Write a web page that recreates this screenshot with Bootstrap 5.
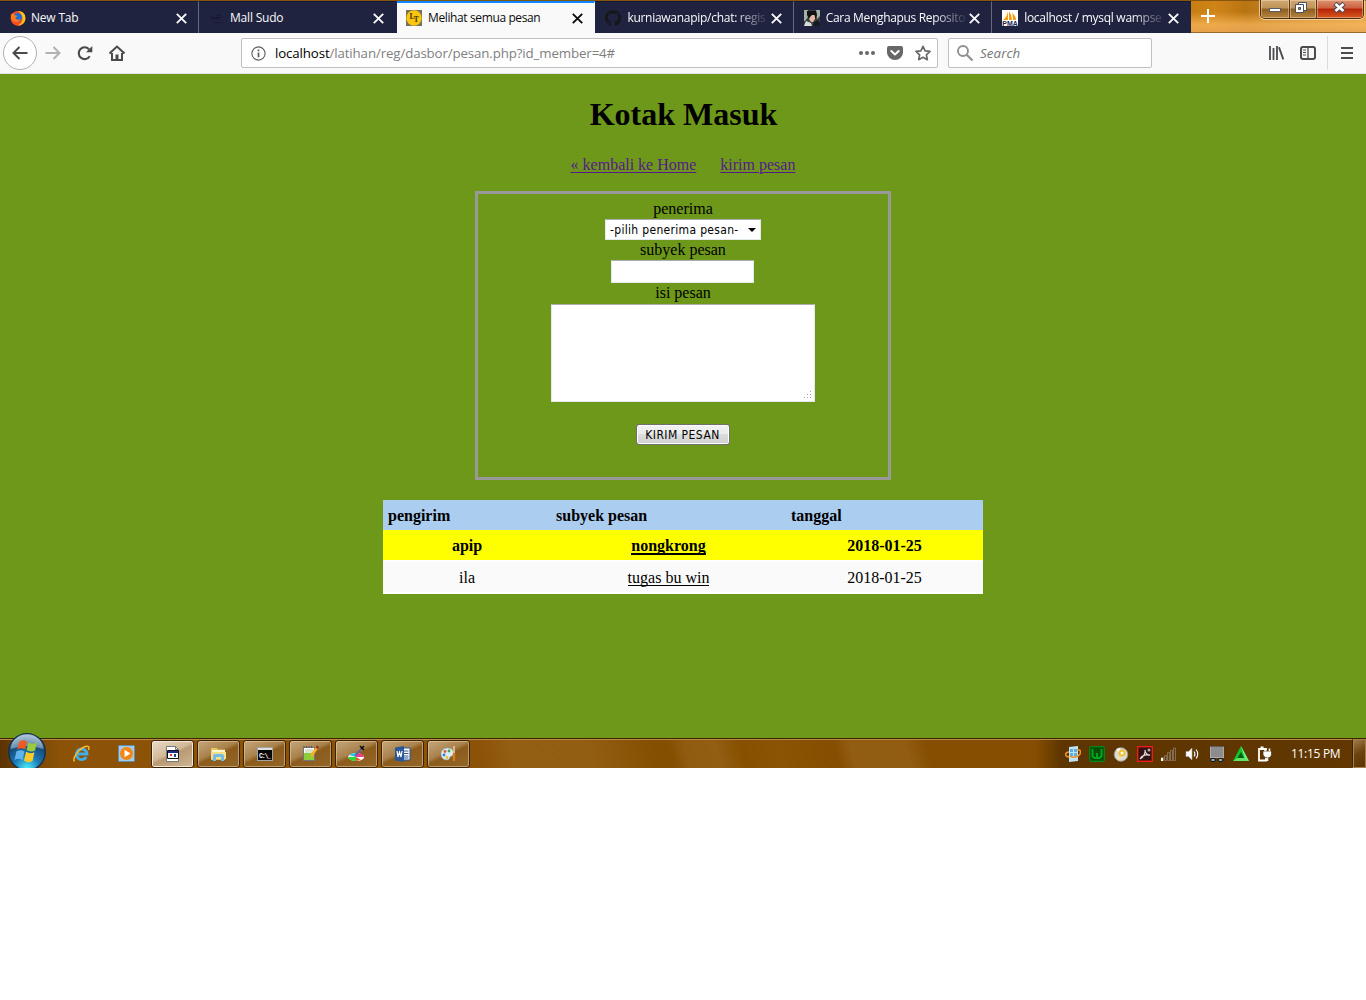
<!DOCTYPE html>
<html lang="id">
<head>
<meta charset="utf-8">
<title>Melihat semua pesan</title>
<link rel="stylesheet" href="https://cdn.jsdelivr.net/npm/bootstrap@5.3.0/dist/css/bootstrap.min.css">
<style>
body{font-family:"Open Sans","Noto Sans",sans-serif;font-size:12px;color:#000;background:#fff;overflow:hidden}
svg{display:block;flex:none}
.screen{width:1366px;height:768px;overflow:hidden}
/* tab strip */
.tabstrip{height:33px;border-top:1px solid #85540f;background:linear-gradient(90deg,#c77d12 1190px,#cf8417 1215px,#b97412 1245px,#c9872e 1290px,#dd9c42 1366px)}
.strip-tail{background:linear-gradient(180deg,rgba(255,190,90,0) 35%,rgba(255,190,100,.65) 75%,rgba(235,170,90,.8));border-bottom:1px solid #9a6a2a;position:relative}
.tab-item{width:198.4px;padding:1px 11px 0 10px;background:#202340;color:#f9f9fa;border-right:1px solid #65677a;border-top:1px solid #181a33}
.tab-item:first-child{width:199px}
.tab-item:nth-child(2){width:198px;padding-right:12px}
.tab-item.no-line{border-right-color:#202340}
.tab-item.is-active{background:#f9f9f9;color:#0c0c0d;border-top:2px solid #0a84ff;border-right-color:#f9f9f9;padding-top:0;padding-left:9px}
.tab-title{width:140px;margin-left:5px;white-space:nowrap;overflow:hidden;letter-spacing:-.38px;line-height:18px}
.tab-item.is-active .tab-title{margin-left:6px}
.tab-title.fade-end{letter-spacing:-.28px;-webkit-mask-image:linear-gradient(90deg,#000 108px,rgba(0,0,0,.12) 138px)}
.winctl{position:absolute;right:2px;top:-1px;height:19px;width:104px;border:1px solid #4b2d10;border-top:0;border-radius:0 0 5px 5px;box-shadow:0 0 0 1px rgba(255,230,190,.7);overflow:hidden}
.winctl>div{border-right:1px solid #5a3a18;background:linear-gradient(#d0a873,#c09358 45%,#8e5d1c 50%,#b88440);box-shadow:inset 0 0 0 1px rgba(255,235,205,.4)}
.winctl>div:last-child{border:0;background:linear-gradient(#dd9270,#cc6040 45%,#b42305 50%,#d75920)}
/* toolbar */
.toolbar{height:41px;background:#f9f9f9;border-bottom:1px solid #e2e2e2}
.back-btn{width:34px;height:34px;border:1px solid #b0b0b0;border-radius:50%;background:#fff}
.field{height:30px;background:#fff;border:1px solid #c0c0c0;border-radius:2px;font-size:13.3px}
.urlbar{width:697px}
.searchbar{width:204px}
.url-text{letter-spacing:-.13px;color:#808080;white-space:nowrap;padding-top:2px}
.search-text{color:#757575;font-style:italic;letter-spacing:.1px;padding-top:2px}
.tool-rule{width:1px;height:34px;background:#dcdcdc}
/* page */
.page{height:664px;background:#6e9819;font-family:"Liberation Serif",serif;font-size:16px;line-height:18px}
.page h1{font-size:32px;font-weight:700;line-height:36px;margin:0;padding:22px 0 1px 1px}
.nav-links{margin-top:23px;height:19px;gap:24px;font-size:16px}
.nav-links a{color:#551a8b;text-decoration:underline;text-underline-offset:2px;text-decoration-thickness:1px}
.send-box{width:416px;height:289px;border:3px solid #999;margin-top:16px;padding-top:6px}
.ctl{font-family:"DejaVu Sans Condensed","DejaVu Sans",sans-serif;font-size:12px;color:#000;border-radius:1px;background:#fff;border:1px solid #e3e9ef;border-top-color:#abadb3}
.ctl-select{width:156px;height:21px;padding:1px 4px 0;letter-spacing:.32px}
.ctl-input{width:143px;height:23px;margin-right:2px}
.ctl-area{width:264px;height:98px;padding:2px}
.ctl-btn{width:94px;height:21px;margin-top:22px;margin-right:1px;padding:1px 0 0;border:1px solid #707070;border-radius:3px;background:linear-gradient(#f2f2f2,#ebebeb 48%,#dddddd 50%,#cfcfcf);box-shadow:inset 0 0 0 1px #fcfcfc;line-height:19px;letter-spacing:.45px}
.inbox{width:600px;margin-top:20px;table-layout:fixed;border-collapse:collapse}
.inbox th{height:30px;background:#abcdef;padding:2px 5px 0;font-weight:700;text-align:left}
.inbox td{height:30px;padding:2px 5px 0;text-align:center}
.inbox a{color:#000;text-decoration:none;border-bottom:1px solid #000;display:inline-block;line-height:15px}
.inbox .unread td{background:#ff0;font-weight:700}
.inbox .unread a{border-bottom-width:2px;line-height:14px}
.inbox .seen td{height:34px;background:linear-gradient(#fff 2px,#fafafa 2px,#fafafa 32px,#fff 32px)}
/* taskbar */
.taskbar{height:30px;position:relative;border-top:1px solid #392304;box-shadow:inset 0 1px 0 #b98c4a;
background:linear-gradient(90deg,rgba(70,38,0,.7),rgba(70,38,0,.15) 45px,transparent 60px,transparent 1035px,rgba(60,32,0,.55) 1062px,rgba(60,32,0,.5)),
linear-gradient(76deg,#8c5208 470px,#935f12 500px,#925e12 575px,#854f00 640px,#854f00 655px,#905c10 670px,#925e12 700px,#875000 724px,#8a5402 760px,#854e00 815px,#915d12 830px,#915d12 884px,#854e00 905px,#884f00)}
.orb{position:absolute;left:7px;top:-7px}
.task{width:43px;height:28px;margin-right:3px;border:1px solid #3a2204;border-radius:3px;background:linear-gradient(155deg,#c5a67b,#a9824c 42%,#8b5c1c 52%,#946628);box-shadow:inset 0 0 0 1px rgba(240,215,175,.5)}
.task.is-on{background:linear-gradient(155deg,#e9dccb,#d0b997 45%,#b89972 52%,#cfb796);box-shadow:inset 0 0 0 1px #f3e8d8}
.tray{gap:8px}
.clock{color:#fff;width:49px;white-space:nowrap;letter-spacing:-.3px;margin-left:18px}
.peek{width:14px;height:29px;margin-left:12px;border:1px solid #a78050;border-left-color:#3a2204;background:linear-gradient(150deg,#a17b4c,#6b420c 50%,#5a3503);box-shadow:inset 1px 0 0 #a78050}
</style>
</head>
<body>
<svg width="0" height="0" class="position-absolute"><defs>
<symbol id="close" viewBox="0 0 11 11"><path d="M.8.8l9.400 9.400M10.200.8L.8 10.200" stroke="currentColor" stroke-width="1.900" fill="none"/></symbol>
</defs></svg>
<div class="screen d-flex flex-column">
<div class="tabstrip d-flex flex-shrink-0">
  <div class="tab-item d-flex align-items-center flex-shrink-0">
    <svg width="16" height="16" viewBox="0 0 16 16"><circle cx="8" cy="8.300" r="7.400" fill="#ff4b1f"/><path d="M8 1c5 0 8 3.500 7.300 8.500-.6 3.500-3.500 6-7.300 6 3-2 5-4 4.500-8C12 4.500 10 2.500 8 1z" fill="#ffc61a"/><circle cx="7.700" cy="7.200" r="4.200" fill="#1a6fd8"/><path d="M.8 4.500L3 3l2 2.300 2.500.6-2 1.800c0 2 3 2.600 5 1.300-1 3-5.500 4-8 1.500C1 9 .6 6.500.8 4.500z" fill="#ff7a18"/></svg>
    <div class="tab-title" style="letter-spacing:-.2px">New Tab</div><svg class="ms-auto" width="11" height="11"><use href="#close"/></svg>
  </div>
  <div class="tab-item no-line d-flex align-items-center flex-shrink-0">
    <svg width="16" height="16" viewBox="0 0 16 16"><path d="M1 7.500h10l2-1M2 9h9M5 12.500h6M7 6l5-1" stroke="#15172e" stroke-width=".9" fill="none"/></svg>
    <div class="tab-title" style="letter-spacing:-.2px">Mall Sudo</div><svg class="ms-auto" width="11" height="11"><use href="#close"/></svg>
  </div>
  <div class="tab-item is-active d-flex align-items-center flex-shrink-0">
    <svg width="16" height="16" viewBox="0 0 16 16"><rect width="16" height="16" fill="#77705d"/><circle cx="8" cy="8" r="7.700" fill="#fcc60e"/><text x="3.600" y="9" font-family="Liberation Serif" font-weight="700" font-size="8" fill="#4a3a08">L</text><text x="7.400" y="12" font-family="Liberation Serif" font-weight="700" font-size="8" fill="#4a3a08">T</text></svg>
    <div class="tab-title">Melihat semua pesan</div><svg class="ms-auto" width="11" height="11"><use href="#close"/></svg>
  </div>
  <div class="tab-item d-flex align-items-center flex-shrink-0">
    <svg width="16" height="16" viewBox="0 0 16 16"><path fill="#15171b" d="M8 0C3.580 0 0 3.580 0 8c0 3.540 2.290 6.530 5.470 7.590.4.070.55-.17.55-.38v-1.490c-2.010.37-2.530-.49-2.690-.94-.09-.23-.48-.94-.82-1.130-.28-.15-.68-.52-.01-.53.63-.01 1.080.58 1.230.82.72 1.210 1.870.87 2.330.66.070-.52.28-.87.510-1.070-1.780-.2-3.640-.89-3.640-3.950 0-.87.310-1.590.82-2.150-.08-.2-.36-1.020.08-2.120 0 0 .67-.21 2.200.82a7.600 7.600 0 0 1 4 0c1.530-1.040 2.200-.82 2.200-.82.440 1.100.16 1.920.08 2.120.510.56.82 1.270.82 2.150 0 3.070-1.870 3.750-3.650 3.950.29.25.54.73.54 1.480v2.200c0 .21.15.46.55.38A8 8 0 0 0 16 8c0-4.420-3.580-8-8-8z"/></svg>
    <div class="tab-title fade-end" style="margin-left:6px">kurniawanapip/chat: regis</div><svg class="ms-auto" width="11" height="11"><use href="#close"/></svg>
  </div>
  <div class="tab-item d-flex align-items-center flex-shrink-0">
    <svg width="16" height="16" viewBox="0 0 16 16"><rect width="16" height="16" fill="#39423f"/><path d="M0 0h4v7L1 11H0zM12 0h4v6l-3 3z" fill="#9fb3a9"/><path d="M5 4h6v5l-2 3H7L5 9z" fill="#e4b8a4"/><path d="M3 1h9l1 4-1.500 4-1-4H8L6 7 5 9 3 5z" fill="#111"/><path d="M0 16l2-5 5 2 1 3z" fill="#d9dcdc"/><path d="M9 16l1-4 4-2 2 3v3z" fill="#161a22"/></svg>
    <div class="tab-title fade-end" style="margin-left:6px;letter-spacing:-.33px">Cara Menghapus Reposito</div><svg class="ms-auto" width="11" height="11"><use href="#close"/></svg>
  </div>
  <div class="tab-item no-line d-flex align-items-center flex-shrink-0">
    <svg width="16" height="16" viewBox="0 0 16 16"><rect width="16" height="16" fill="#fff"/><path d="M1 10Q5 7 6 1v9zM7 10V1q3 4 3 9zM11 10q0-4-1-7 4 3 4 7z" fill="#f89c0e"/><text x=".3" y="15.800" textLength="15.400" lengthAdjust="spacingAndGlyphs" font-family="Liberation Sans" font-weight="700" font-size="6.500" fill="#24264f">PMA</text></svg>
    <div class="tab-title fade-end" style="margin-left:6px">localhost / mysql wampse</div><svg class="ms-auto" width="11" height="11"><use href="#close"/></svg>
  </div>
  <div class="strip-tail flex-grow-1 d-flex">
    <svg width="34" height="32" viewBox="0 0 34 32"><path d="M10 15h14M17 8v14" stroke="#fff" stroke-width="2"/></svg>
    <div class="winctl d-flex">
      <div style="width:29px"><svg width="28" height="18"><rect x="8.500" y="8.500" width="11" height="3" fill="#fff" stroke="#555b6b"/></svg></div>
      <div style="width:27px"><svg width="26" height="18"><path d="M8.500 2.500h8v8h-8z" fill="#fff" stroke="#4b4f61"/><path d="M5.500 4.500h8v8h-8z" fill="#fff" stroke="#4b4f61"/><path d="M8.500 7.500h2v2h-2z" fill="#b38548" stroke="#4b4f61"/></svg></div>
      <div class="flex-grow-1"><svg width="46" height="18"><path d="M18 3.500l9 8M27 3.500l-9 8" stroke="#4b4858" stroke-width="4.800"/><path d="M18.500 4l8 7M26.500 4l-8 7" stroke="#fff" stroke-width="2.600"/></svg></div>
    </div>
  </div>
</div>

<div class="toolbar d-flex align-items-center flex-shrink-0">
  <div class="back-btn d-flex align-items-center justify-content-center" style="margin-left:3px"><svg width="16" height="14" viewBox="0 0 16 14"><path d="M15.500 7H2M7.500 1L1.500 7l6 6" fill="none" stroke="#4b4b4d" stroke-width="2"/></svg></div>
  <svg style="margin-left:8px" width="16" height="14" viewBox="0 0 16 14"><path d="M.5 7H14M8.500 1l6 6-6 6" fill="none" stroke="#b2b2b2" stroke-width="2"/></svg>
  <svg style="margin-left:16px" width="16" height="16" viewBox="0 0 16 16"><path d="M12.700 11.300A5.900 5.900 0 1 1 12 4.200" fill="none" stroke="#4b4b4d" stroke-width="2.100"/><path d="M15.300 1v6.300H9z" fill="#4b4b4d"/></svg>
  <svg style="margin-left:16px" width="16" height="16" viewBox="0 0 16 16"><path d="M.5 8.500L8 1.500l7.500 7" fill="none" stroke="#4b4b4d" stroke-width="2"/><path d="M3 8v7h10V8" fill="none" stroke="#4b4b4d" stroke-width="2"/><path d="M6.500 15V9.500h3V15z" fill="#4b4b4d"/></svg>
  <div class="field urlbar d-flex align-items-center" style="margin-left:116px;padding:0 6px 0 9px">
    <svg width="15" height="15" viewBox="0 0 15 15"><circle cx="7.500" cy="7.500" r="6.600" fill="none" stroke="#5c5c5c" stroke-width="1.100"/><path d="M7.500 6.500v4.700M7.500 3.500v1.700" stroke="#5c5c5c" stroke-width="1.700"/></svg>
    <div class="url-text" style="margin-left:9px"><span style="color:#000">localhost</span>/latihan/reg/dasbor/pesan.php?id_member=4#</div>
    <svg class="ms-auto" width="16" height="4"><circle cx="2" cy="2" r="2" fill="#676767"/><circle cx="8" cy="2" r="2" fill="#676767"/><circle cx="14" cy="2" r="2" fill="#676767"/></svg>
    <svg style="margin-left:12px" width="16" height="16" viewBox="0 0 16 16"><path d="M2 1h12a2 2 0 0 1 2 2v4.500a8 7.500 0 0 1-16 0V3a2 2 0 0 1 2-2z" fill="#676767"/><path d="M4.300 6L8 9.500 11.700 6" fill="none" stroke="#fff" stroke-width="2" stroke-linecap="round" stroke-linejoin="round"/></svg>
    <svg style="margin-left:12px" width="16" height="16" viewBox="0 0 16 16"><path d="M8 1.300l2.100 4.500 4.900.6-3.600 3.400.9 4.900L8 12.300l-4.300 2.400.9-4.900L1 6.400l4.900-.6z" fill="none" stroke="#676767" stroke-width="1.700" stroke-linejoin="round"/></svg>
  </div>
  <div class="field searchbar d-flex align-items-center" style="margin-left:10px;padding-left:8px">
    <svg width="16" height="16" viewBox="0 0 16 16"><circle cx="6" cy="6" r="5" fill="none" stroke="#8f8f8f" stroke-width="1.900"/><path d="M9.700 9.700L15.500 15.500" stroke="#8f8f8f" stroke-width="2.200"/></svg>
    <div class="search-text" style="margin-left:7px">Search</div>
  </div>
  <svg style="margin-left:117px" width="15" height="14" viewBox="0 0 15 14"><path d="M1 0v14M4.500 2v12M8 0v14" stroke="#4b4b4d" stroke-width="1.800"/><path d="M10 1.200L14.300 13.500" stroke="#4b4b4d" stroke-width="1.900"/></svg>
  <svg style="margin-left:16px" width="16" height="14" viewBox="0 0 16 14"><rect x="1" y="1" width="14" height="12" rx="2" fill="none" stroke="#4b4b4d" stroke-width="2"/><path d="M8 1v12" stroke="#4b4b4d" stroke-width="1.300"/><path d="M3 4h3M3 6.500h3M3 9h3" stroke="#4b4b4d"/></svg>
  <div class="tool-rule" style="margin-left:11px"></div>
  <svg style="margin-left:13px" width="12" height="12" viewBox="0 0 12 12"><path d="M0 1h12M0 6h12M0 11h12" stroke="#4b4b4d" stroke-width="2"/></svg>
</div>

<main class="page d-flex flex-column align-items-center flex-shrink-0">
  <h1>Kotak Masuk</h1>
  <div class="nav-links d-flex"><a href="#">« kembali ke Home</a><a href="#">kirim pesan</a></div>
  <form class="send-box d-flex flex-column align-items-center">
    <label style="height:19px">penerima</label>
    <div class="ctl ctl-select d-flex align-items-center justify-content-between"><span>-pilih penerima pesan-</span><svg width="8" height="4"><path d="M0 0h8L4 4z"/></svg></div>
    <label style="height:20px;padding-top:1px">subyek pesan</label>
    <div class="ctl ctl-input"></div>
    <label style="height:21px;padding-top:1px">isi pesan</label>
    <div class="ctl ctl-area d-flex align-items-end justify-content-end"><svg width="9" height="9" fill="#aaa"><path d="M7 1h1v1H7zM4 4h1v1H4zM7 4h1v1H7zM1 7h1v1H1zM4 7h1v1H4zM7 7h1v1H7z"/></svg></div>
    <button type="button" class="ctl ctl-btn">KIRIM PESAN</button>
  </form>
  <table class="inbox">
    <colgroup><col style="width:168px"><col style="width:235px"><col style="width:197px"></colgroup>
    <tr><th>pengirim</th><th>subyek pesan</th><th>tanggal</th></tr>
    <tr class="unread"><td>apip</td><td><a href="#">nongkrong</a></td><td>2018-01-25</td></tr>
    <tr class="seen"><td>ila</td><td><a href="#">tugas bu win</a></td><td>2018-01-25</td></tr>
  </table>
</main>

<div class="taskbar d-flex align-items-center flex-shrink-0">
  <svg class="orb" width="40" height="40" viewBox="0 0 40 40"><defs><radialGradient id="og" cx=".5" cy=".95" r=".9"><stop offset="0" stop-color="#4ff0ff"/><stop offset=".4" stop-color="#1b78b4"/><stop offset=".75" stop-color="#174a78"/><stop offset="1" stop-color="#8fb0c8"/></radialGradient></defs>
    <circle cx="20" cy="20" r="18.300" fill="url(#og)" stroke="#17304a" stroke-width="1.400"/><path d="M4 17a16 15 0 0 1 32 0q-16-6-32 0z" fill="#c3d8e6" opacity=".5"/>
    <path d="M12.500 9.500q4-2.500 7.500 0L18 17.500q-4-2.300-8 0z" fill="#ef5a22"/><path d="M21.500 10.500q4 2.500 8.500 0L28 18.500q-4 2.200-8.500-.5z" fill="#9acb3a"/><path d="M9.500 19.300q4-2.300 8 0L15.500 28q-4-2.500-8 0z" fill="#5fb4f0"/><path d="M19 19.800q4.500 2.700 8.500.5L25.500 29q-4 2.500-8.500-.5z" fill="#ffc928"/></svg>
  <svg style="margin-left:73px" width="17" height="18" viewBox="0 0 17 18"><path d="M13.300 12A5.300 5.300 0 1 1 14 9H5" fill="none" stroke="#40aee9" stroke-width="2.900"/><path d="M1.500 16.500C-1 13 6 3.500 12.500 1.500c3.500-1 4 1 3 3.500" fill="none" stroke="#f4b92c" stroke-width="1.500"/></svg>
  <svg style="margin-left:28px;margin-right:1px" width="17" height="17" viewBox="0 0 17 17"><rect x=".5" y=".5" width="16" height="16" rx="1" fill="#a6cbe4" stroke="#5d8eb0"/><circle cx="8.500" cy="8.500" r="6.500" fill="#f58411"/><path d="M6.500 4.800l6 3.700-6 3.700z" fill="#fff"/></svg>
  <div class="d-flex" style="margin-left:15px">
    <div class="task is-on d-flex align-items-center justify-content-center"><svg width="16" height="16" viewBox="0 0 16 16"><path d="M1.500.5h9l3 3v12h-12z" fill="#fff" stroke="#777"/><path d="M10.500.5v3h3" fill="none" stroke="#777"/><path d="M2.500 4.500h11v8h-11z" fill="#fff" stroke="#111"/><path d="M3 5h10v2H3z" fill="#1c2b8c"/><path d="M5 8h2v2H5z" fill="#d33"/><path d="M9 8h2v3H9z" fill="#247"/></svg></div>
    <div class="task d-flex align-items-center justify-content-center"><svg width="17" height="16" viewBox="0 0 17 16"><path d="M1 2h6l1 1.500h7V14H1z" fill="#e5c65f"/><path d="M2 4h13v3H2z" fill="#fff7cf"/><path d="M1 6h15v7H1z" fill="#f5df8b"/><path d="M3 15V10q0-2 2-2h7q2 0 2 2v5h-3v-4H6v4z" fill="#73bce7"/></svg></div>
    <div class="task d-flex align-items-center justify-content-center"><svg width="16" height="14" viewBox="0 0 16 14"><rect x=".5" y=".5" width="15" height="13" fill="#050505" stroke="#a3a3a3"/><path d="M1 1h14v2H1z" fill="#ddd"/><text x="2" y="10.500" font-family="Liberation Mono" font-weight="700" font-size="6.500" textLength="12" fill="#fff">C:\_</text></svg></div>
    <div class="task d-flex align-items-center justify-content-center"><svg width="17" height="17" viewBox="0 0 17 17"><path d="M1.500 2.500h11v13h-11z" fill="#fff" stroke="#72757b"/><path d="M2 8h10v7H2z" fill="#8cce3a"/><path d="M3 5h8M3 7h8" stroke="#b6c59a"/><path d="M2 1v2M4.500 1v2M7 1v2M9.500 1v2" stroke="#555"/><path d="M8 12l.8-3L14 2l2 1.500L11 11z" fill="#f3b127"/><path d="M13.500 2.500L15 .5 17 2l-1.500 2z" fill="#a32922"/></svg></div>
    <div class="task d-flex align-items-center justify-content-center"><svg width="17" height="17" viewBox="0 0 17 17"><ellipse cx="8" cy="12" rx="8" ry="4" fill="#eee"/><path d="M8 12L1 10a8 4 0 0 1 7-2z" fill="#26c9d8"/><path d="M8 12V8q7 0 8 4z" fill="#e93d8c"/><path d="M8 12h8q-1 3.500-7 4z" fill="#fff"/><path d="M8 12v4q-7 0-8-4z" fill="#35d334"/><path d="M8 12l5 3-5 1z" fill="#ed4e2b"/><path d="M7 11l6-7" stroke="#5560b8" stroke-width="1.500"/><path d="M12 1l4 4M13 4l3-3" stroke="#111" stroke-width="1.600"/></svg></div>
    <div class="task d-flex align-items-center justify-content-center"><svg width="17" height="16" viewBox="0 0 17 16"><path d="M8 2h8v12H8z" fill="#fff" stroke="#2b5797"/><path d="M10 5h4.500M10 7.500h4.500M10 10h4.500M10 12h4.500" stroke="#2b5797"/><path d="M1 1.500L10 0v16l-9-1.500z" fill="#2b5797"/><path d="M3 5l1 6 1.500-5L7 11l1-6" fill="none" stroke="#fff" stroke-width="1.200"/></svg></div>
    <div class="task d-flex align-items-center justify-content-center"><svg width="16" height="17" viewBox="0 0 16 17"><path d="M6.500 3C11 3 13 6 12.500 9c0 2-2 2-3 2.500S9 15 6 15C2 15 0 12 0 9s2.500-6 6.500-6z" fill="#d9ecf5" stroke="#8fa8b8" stroke-width=".6"/><circle cx="4" cy="6.500" r="1.400" fill="#e8542f"/><circle cx="8" cy="6" r="1.400" fill="#3ba845"/><circle cx="3" cy="10" r="1.400" fill="#3b78d2"/><circle cx="6" cy="12.500" r="1.400" fill="#edbf28"/><path d="M13 1v7" stroke="#d7b78b" stroke-width="2"/><path d="M13 8v8" stroke="#d9791c" stroke-width="2.400"/></svg></div>
  </div>
  <div class="tray ms-auto d-flex align-items-center">
    <svg width="16" height="16" viewBox="0 0 16 16"><path d="M4 1l9-1v15l-9 1z" fill="#bde4f8"/><path d="M5 3h3v3H5zM9 3h3v3H9zM5 7h3v3H5zM9 7h3v3H9z" fill="#5dadde"/><path d="M4 6C-1 6 0 11 4 11M12 4c5-1 4 4 1 6-3 1.500-6 1.500-8 0" fill="none" stroke="#ee932a" stroke-width="1.600"/></svg>
    <svg width="16" height="16" viewBox="0 0 16 16"><rect x=".7" y=".7" width="14.600" height="14.600" rx="1.500" fill="#064d0a" stroke="#008a18" stroke-width="1.200"/><path d="M3.500 3v7l2 2h5l2-2V3M8 7v5" fill="none" stroke="#00a81c" stroke-width="1.900"/></svg>
    <svg width="16" height="16" viewBox="0 0 16 16"><circle cx="8" cy="8.500" r="6.800" fill="#dedbd2" stroke="#999386"/><path d="M8 8.500L3 3l4-1z" fill="#fff"/><circle cx="9" cy="7" r="3.500" fill="#efc42a"/><circle cx="9" cy="7" r="1.500" fill="#fff"/><path d="M3 11h5l-2 4z" fill="#f3e49b"/></svg>
    <svg width="16" height="16" viewBox="0 0 16 16"><rect x=".7" y=".7" width="14.600" height="14.600" fill="#301313" stroke="#ed1c16" stroke-width="1.400"/><path d="M3 13c3-1 6-6 5-9M3 13c2-4 7-5 10-4M8 4c0 3 3 6 5 5" fill="none" stroke="#e5dcdc" stroke-width="1.200"/><circle cx="12" cy="4" r="1.500" fill="#b8a7a5"/></svg>
    <svg width="16" height="14" viewBox="0 0 16 14"><path d="M.5 10.500h2v3h-2zM3.500 8.500h2v5h-2zM6.500 5.500h2v8h-2zM9.500 3.500h2v10h-2zM12.500 1h2v12.500h-2z" fill="#5a3b18" stroke="#927a5c" stroke-width=".8"/><path d="M0 11h2v3H0z" fill="#fff"/></svg>
    <svg width="16" height="14" viewBox="0 0 16 14"><path d="M1 4.500h2.500L7 1v12L3.500 9.500H1z" fill="#fff" stroke="#aaa" stroke-width=".6"/><path d="M9 4.500q2 2.500 0 5M11 2.500q3.500 4.500 0 9" fill="none" stroke="#fff" stroke-width="1.100"/></svg>
    <svg width="16" height="16" viewBox="0 0 16 16"><rect x="1.500" y=".5" width="13" height="11" fill="#8d8d8d" stroke="#ababab"/><path d="M1 0h14" stroke="#161616"/><ellipse cx="4" cy="14" rx="2.500" ry="1.600" fill="#8faccb" stroke="#111"/><ellipse cx="11.500" cy="14" rx="2.500" ry="1.600" fill="#8faccb" stroke="#111"/></svg>
    <svg width="16" height="16" viewBox="0 0 16 16"><path d="M8 0l8 15H0z" fill="#12c42e"/><path d="M8 0l8 15-4-1.500z" fill="#75f07e"/><path d="M8 6l3 6H4.500z" fill="#055d18"/><path d="M0 15l4.500-3H11l5 3z" fill="#5fe568"/></svg>
    <svg width="16" height="16" viewBox="0 0 16 16"><path d="M3.500 1.500h3M2 3h7v11.500H2z" fill="none" stroke="#fff" stroke-width="1.800"/><path d="M6 5h8.500v4q-1 3-4 3T6 9z" fill="#fff" stroke="#4a2c04" stroke-width=".7"/><path d="M8 5V2.500M12.500 5V2.500M10.500 12v3" stroke="#fff" stroke-width="1.600"/></svg>
  </div>
  <div class="clock">11:15 PM</div>
  <div class="peek"></div>
</div>
</div>
<script src="https://cdn.jsdelivr.net/npm/bootstrap@5.3.0/dist/js/bootstrap.bundle.min.js"></script>
</body>
</html>
